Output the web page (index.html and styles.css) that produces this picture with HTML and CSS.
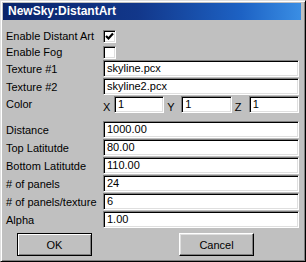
FILE: index.html
```html
<!DOCTYPE html>
<html lang="en">
<head>
  <meta charset="UTF-8" />
  <title>NewSky:DistantArt</title>
  <link rel="stylesheet" href="styles.css">
</head>
<body>

<div class="window">
  <div class="titlebar">NewSky:DistantArt</div>

  <div class="dialog">
    <div class="row check-row">
      <span class="label">Enable Distant Art</span>
      <span class="check">
        <svg width="9" height="9" viewBox="0 0 9 9"><path d="M1 4 L3.5 6.5 L8 1.5" fill="none" stroke="#000" stroke-width="2.2"/></svg>
      </span>
    </div>
    <div class="row check-row">
      <span class="label">Enable Fog</span>
      <span class="check"></span>
    </div>
    <div class="row">
      <span class="label">Texture #1</span>
      <div class="field">skyline.pcx</div>
    </div>
    <div class="row">
      <span class="label">Texture #2</span>
      <div class="field">skyline2.pcx</div>
    </div>
    <div class="row color-row">
      <span class="label color-label">Color</span>
      <div class="xyz">
        <span class="axis">X</span><div class="field">1</div>
        <span class="axis">Y</span><div class="field">1</div>
        <span class="axis">Z</span><div class="field">1</div>
      </div>
    </div>
    <div class="row">
      <span class="label">Distance</span>
      <div class="field">1000.00</div>
    </div>
    <div class="row">
      <span class="label">Top Latitutde</span>
      <div class="field">80.00</div>
    </div>
    <div class="row">
      <span class="label">Bottom Latitutde</span>
      <div class="field">110.00</div>
    </div>
    <div class="row">
      <span class="label"># of panels</span>
      <div class="field">24</div>
    </div>
    <div class="row">
      <span class="label"># of panels/texture</span>
      <div class="field">6</div>
    </div>
    <div class="row">
      <span class="label">Alpha</span>
      <div class="field">1.00</div>
    </div>

    <div class="buttons">
      <button class="btn default">OK</button>
      <button class="btn">Cancel</button>
    </div>
  </div>
</div>

</body>
</html>
```

FILE: styles.css
```css
body {
  margin: 0;
  padding: 0;
  background-color: #c0c0c0;
  font-family: "Liberation Sans", Arial, sans-serif;
  font-size: 11px;
  color: #000;
}

.window {
  width: 306px;
  height: 262px;
  box-sizing: border-box;
  background-color: #c0c0c0;
  border: 1px solid;
  border-color: #dfdfdf #000 #000 #dfdfdf;
  box-shadow: inset 1px 1px #fff, inset -1px -1px #808080;
  padding: 2px;
}

.titlebar {
  height: 17px;
  margin: 0 2px 0 0;
  padding-left: 5px;
  line-height: 17px;
  color: #fff;
  font-weight: bold;
  font-size: 12px;
  background: linear-gradient(to right, #0a246a 0%, #12378a 45%, #1d62c4 80%, #3a8ee4 100%);
}

.dialog {
  padding: 8px 3px 0 3px;
}

.row {
  display: flex;
  align-items: center;
  height: 17px;
  margin-bottom: 1px;
}

.check-row {
  height: 16px;
  margin-bottom: 0;
}

.label {
  width: 97px;
  flex-shrink: 0;
  white-space: nowrap;
}

.check {
  width: 9px;
  height: 9px;
  background: #fff;
  border: 1px solid;
  border-color: #808080 #fff #fff #808080;
  box-shadow: inset 1px 1px #000, inset -1px -1px #dfdfdf;
  padding: 1px;
  display: flex;
  align-items: center;
  justify-content: center;
}

.field {
  flex: 1;
  height: 17px;
  box-sizing: border-box;
  background: #fff;
  border: 1px solid;
  border-color: #808080 #fff #fff #808080;
  box-shadow: inset 1px 1px #000, inset -1px -1px #dfdfdf;
  padding: 0 3px;
  line-height: 15px;
  margin-right: 1px;
  white-space: nowrap;
  overflow: hidden;
}

.color-row {
  height: 18px;
  margin-bottom: 7px;
  align-items: flex-start;
}

.color-label {
  padding-top: 2px;
}

.xyz {
  flex: 1;
  display: flex;
  align-items: flex-start;
}

.axis {
  padding: 6px 0 0 0;
  line-height: 11px;
  width: 11px;
}

.xyz .axis + .field {
  margin-right: 0;
}

.xyz .axis:nth-child(3),
.xyz .axis:nth-child(5) {
  width: 14px;
  padding-left: 3px;
}

.xyz .field:last-child {
  margin-right: 1px;
}

.buttons {
  display: flex;
  gap: 87px;
  padding-left: 11px;
  margin-top: 5px;
}

.btn {
  width: 75px;
  height: 23px;
  background: #c0c0c0;
  font-family: "Liberation Sans", Arial, sans-serif;
  font-size: 11px;
  color: #000;
  border: 1px solid;
  border-color: #fff #000 #000 #fff;
  box-shadow: inset -1px -1px #808080, inset 1px 1px #dfdfdf;
  padding: 0;
}

.btn.default {
  border: 1px solid #000;
  box-shadow: inset 1px 1px #fff, inset -1px -1px #808080;
}
```
